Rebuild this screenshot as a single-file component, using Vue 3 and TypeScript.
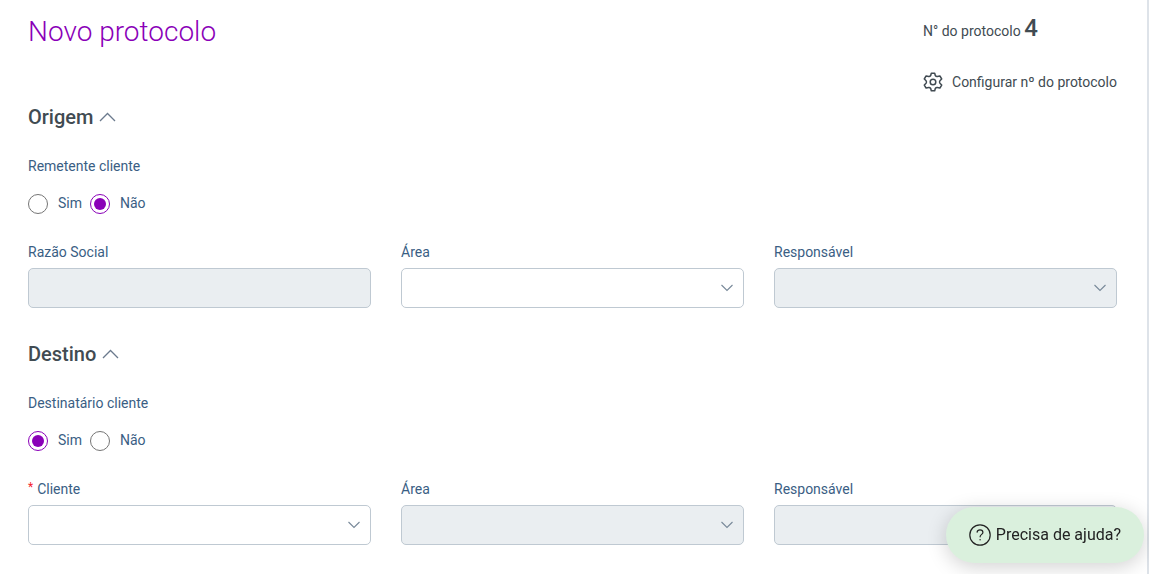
<script setup lang="ts">
import { reactive } from 'vue'

interface Field {
  id: string
  label: string
  kind: 'text' | 'select'
  disabled: boolean
  required?: boolean
}

interface Section {
  id: string
  title: string
  question: string
  answer: 'sim' | 'nao'
  open: boolean
  fields: Field[]
}

const options = [
  { value: 'sim', label: 'Sim' },
  { value: 'nao', label: 'Não' },
]

const sections = reactive<Section[]>([
  {
    id: 'origem',
    title: 'Origem',
    question: 'Remetente cliente',
    answer: 'nao',
    open: true,
    fields: [
      { id: 'origem-razao', label: 'Razão Social', kind: 'text', disabled: true },
      { id: 'origem-area', label: 'Área', kind: 'select', disabled: false },
      { id: 'origem-responsavel', label: 'Responsável', kind: 'select', disabled: true },
    ],
  },
  {
    id: 'destino',
    title: 'Destino',
    question: 'Destinatário cliente',
    answer: 'sim',
    open: true,
    fields: [
      { id: 'destino-cliente', label: 'Cliente', kind: 'select', disabled: false, required: true },
      { id: 'destino-area', label: 'Área', kind: 'select', disabled: true },
      { id: 'destino-responsavel', label: 'Responsável', kind: 'select', disabled: true },
    ],
  },
])
</script>

<template>
  <main class="page">
    <header class="header">
      <h1 class="title">Novo protocolo</h1>
      <div class="protocol">
        <p class="number">N° do protocolo <strong>4</strong></p>
        <button type="button" class="configure">
          <svg class="gear" viewBox="0 0 20 20" aria-hidden="true">
            <path d="M7.7 3.5 8.3 1.2H11.7L12.3 3.5Q13 4.6 14.2 4.5L16.9 3.9 18.7 7 16.9 8.8Q16.1 10 16.9 11.2L18.7 13 16.9 16.1 14.2 15.5Q13 15.4 12.3 16.5L11.7 18.8H8.3L7.7 16.5Q7 15.4 5.8 15.5L3.1 16.1 1.3 13 3.1 11.2Q3.9 10 3.1 8.8L1.3 7 3.1 3.9 5.8 4.5Q7 4.6 7.7 3.5Z" />
            <circle cx="10" cy="10" r="2.8" />
          </svg>
          <span>Configurar nº do protocolo</span>
        </button>
      </div>
    </header>

    <form class="form" @submit.prevent>
      <section v-for="section in sections" :key="section.id" class="section">
        <h2 class="heading">
          <button type="button" class="toggle" :aria-expanded="section.open" @click="section.open = !section.open">
            <span>{{ section.title }}</span>
            <svg class="caret" :class="{ closed: !section.open }" viewBox="0 0 17 12" aria-hidden="true">
              <path d="M1 10 8.5 2.5 16 10" />
            </svg>
          </button>
        </h2>

        <template v-if="section.open">
          <div role="radiogroup" :aria-labelledby="section.id + '-question'">
            <div :id="section.id + '-question'" class="label">{{ section.question }}</div>
            <div class="radios">
              <label v-for="option in options" :key="option.value" class="radio">
                <input v-model="section.answer" type="radio" :name="section.id" :value="option.value" />
                <span>{{ option.label }}</span>
              </label>
            </div>
          </div>

          <div class="fields">
            <div v-for="field in section.fields" :key="field.id" class="field">
              <label class="label" :for="field.id">
                <span v-if="field.required" class="required">*</span>
                <span>{{ field.label }}</span>
              </label>
              <input v-if="field.kind === 'text'" :id="field.id" class="control" type="text" :disabled="field.disabled" />
              <div v-else class="select">
                <select :id="field.id" class="control" :disabled="field.disabled" :required="field.required">
                  <option value=""></option>
                </select>
                <svg class="chevron" viewBox="0 0 12 8" aria-hidden="true">
                  <path d="M0.5 1 6 6.5 11.5 1" />
                </svg>
              </div>
            </div>
          </div>
        </template>
      </section>
    </form>

    <button type="button" class="help">
      <svg class="help-icon" viewBox="0 0 22 22" aria-hidden="true">
        <circle cx="11" cy="11" r="10.2" />
        <path d="M8.1 8.2C8.3 6.7 9.4 5.9 11 5.9S13.9 6.9 13.9 8.4C13.9 10.4 11.1 10.4 11.1 12.8" />
        <circle class="dot" cx="11.1" cy="15.8" r="0.7" />
      </svg>
      <span>Precisa de ajuda?</span>
    </button>
  </main>
</template>

<style>
body {
  margin: 0;
  background: #fff;
}
</style>

<style scoped>
.page {
  box-sizing: border-box;
  min-height: 100vh;
  padding: 12px 30px 24px 28px;
  border-right: 2px solid #dee3e9;
  background: #fff;
  color: #414b52;
  font: 14px/20px Roboto, "Liberation Sans", sans-serif;
}

button {
  padding: 0;
  border: 0;
  background: none;
  color: inherit;
  font: inherit;
  cursor: pointer;
}

.header {
  display: flex;
  justify-content: space-between;
  align-items: flex-start;
}

.title {
  margin: 0;
  color: #8a00b8;
  font-size: 28px;
  font-weight: 300;
  line-height: 40px;
}

.protocol {
  display: flex;
  flex-direction: column;
  gap: 25px;
}

.number {
  margin: 0;
  line-height: 32px;
}

.number strong {
  font-size: 24px;
  font-weight: 500;
}

.configure {
  display: flex;
  align-items: center;
  gap: 9px;
}

.gear {
  width: 20px;
  height: 20px;
  fill: none;
  stroke: #414b52;
  stroke-width: 1.5;
  stroke-linejoin: round;
}

.form {
  display: flex;
  flex-direction: column;
  gap: 34px;
  margin-top: 13px;
}

.heading {
  margin: 0 0 27px;
  font-size: 20px;
  font-weight: 500;
  line-height: 24px;
}

.toggle {
  display: flex;
  align-items: center;
  gap: 6px;
}

.caret {
  width: 17px;
  height: 12px;
  fill: none;
  stroke: #6b7a8d;
  stroke-width: 1.3;
}

.caret.closed {
  transform: rotate(180deg);
}

.label {
  display: flex;
  gap: 4px;
  color: #3a5e84;
}

.required {
  color: #f5222d;
  font-size: 12px;
  line-height: 16px;
}

.radios {
  display: flex;
  gap: 8px;
  margin-top: 18px;
}

.radio {
  display: flex;
  gap: 10px;
  color: #3a5e84;
  line-height: 18px;
}

.radio input {
  display: grid;
  place-items: center;
  width: 20px;
  height: 20px;
  margin: 0;
  border: 1px solid #757575;
  border-radius: 50%;
  background: #fff;
  appearance: none;
}

.radio input:checked {
  border-color: #8a00b8;
}

.radio input:checked::before {
  width: 12px;
  height: 12px;
  border-radius: 50%;
  background: #8a00b8;
  content: "";
}

.fields {
  display: grid;
  grid-template-columns: repeat(3, minmax(0, 1fr));
  gap: 30px;
  margin-top: 28px;
}

.field {
  display: flex;
  flex-direction: column;
  gap: 6px;
}

.control {
  box-sizing: border-box;
  width: 100%;
  height: 40px;
  padding: 0 12px;
  border: 1px solid #bfc9d2;
  border-radius: 5px;
  background: #fff;
  color: #3a5e84;
  font: inherit;
  appearance: none;
}

.control:disabled {
  background: #eaeef1;
  opacity: 1;
}

.select {
  display: grid;
  align-items: center;
}

.select > * {
  grid-area: 1 / 1;
}

.chevron {
  justify-self: end;
  width: 12px;
  height: 8px;
  margin-right: 11px;
  fill: none;
  stroke: #778899;
  stroke-width: 1.1;
  pointer-events: none;
}

.help {
  position: fixed;
  right: 5px;
  bottom: 11px;
  display: flex;
  align-items: center;
  gap: 5px;
  height: 56px;
  padding: 0 23px;
  border-radius: 28px;
  background: #daf0dd;
  box-shadow: 0 4px 20px rgba(0, 0, 0, 0.18);
  color: #222;
  font-size: 16px;
}

.help-icon {
  width: 22px;
  height: 22px;
  fill: none;
  stroke: #222;
  stroke-width: 1.2;
  stroke-linecap: round;
}

.help-icon .dot {
  fill: #222;
  stroke: none;
}
</style>
